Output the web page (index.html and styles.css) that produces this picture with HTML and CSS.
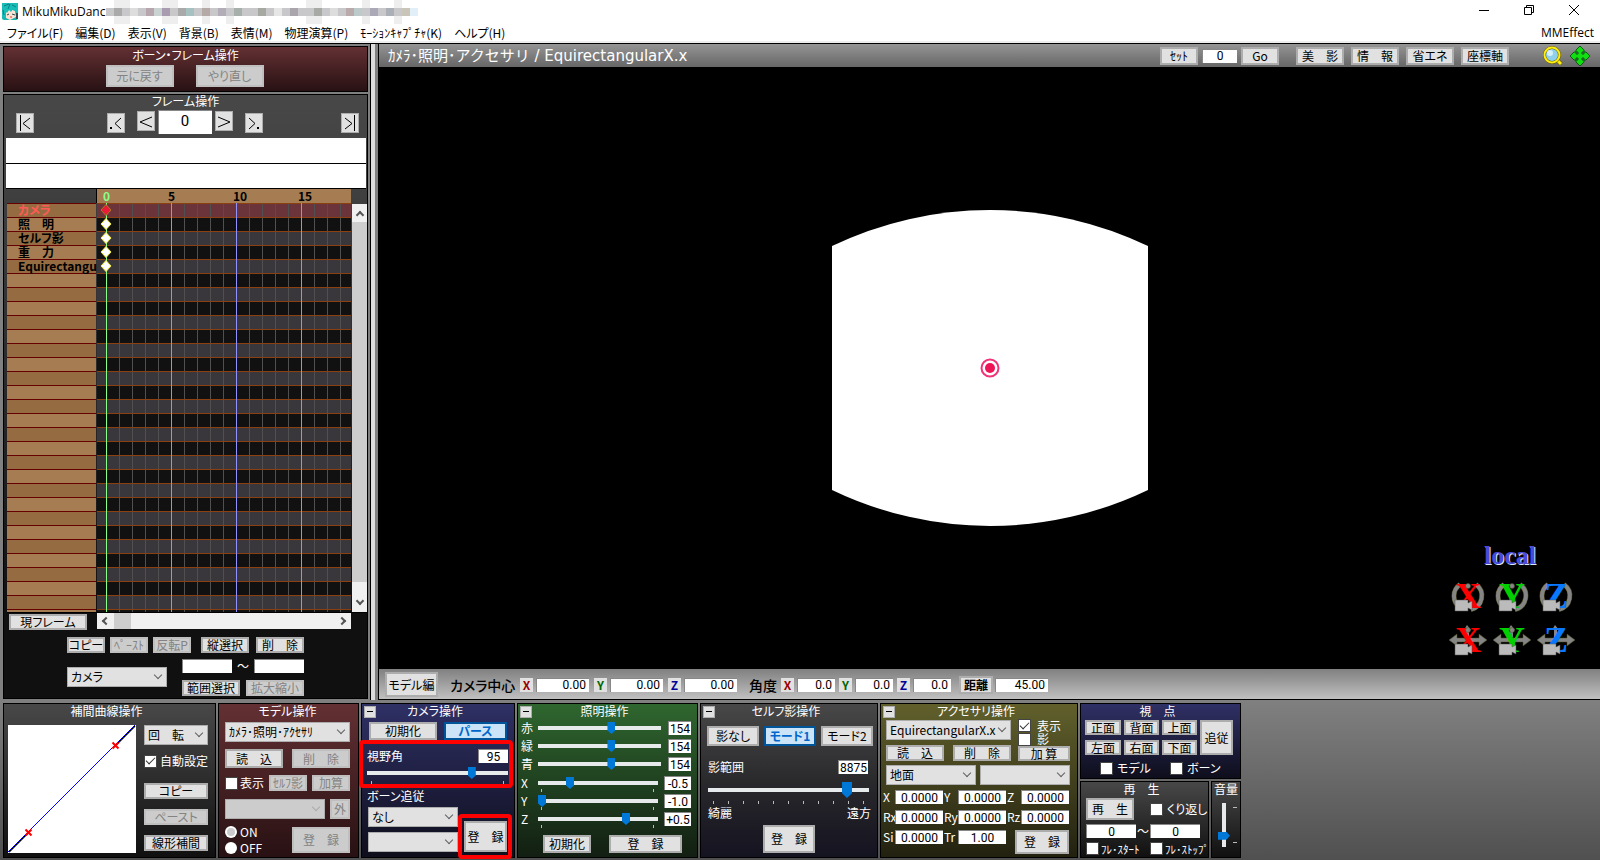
FILE: index.html
```html
<!DOCTYPE html>
<html lang="ja">
<head>
<meta charset="utf-8">
<title>MikuMikuDance</title>
<link rel="stylesheet" href="styles.css">
</head>
<body>
<div class="app">
  <header class="titlebar">
    <svg class="app-icon" width="16" height="17" viewBox="0 0 16 17" aria-hidden="true"><rect width="16" height="17" rx="2" fill="#16b5b2"/><path d="M4 9L8 6L13 8L14 14L8 17L4 15Z" fill="#fbe3d3"/><path d="M0 0H16V9L13 8L11 6L9 9L7 7L5 10L4 9L4 15L0 13Z" fill="#18bdb8"/><path d="M2 3L7 1M10 2l4 2M1 7l1 5M8 1l-2 5" stroke="#0b7d83" fill="none"/><path d="M5 12l2-1M10 11l3 1" stroke="#244b58"/><path d="M8 14h2" stroke="#d33"/><path d="M14 10h2v6h-2z" fill="#32484c"/></svg>
    <span class="app-name">MikuMikuDanc</span>
    <svg class="mosaic" width="312" height="24" viewBox="0 0 312 24" aria-hidden="true">
      <g fill="#eee"><rect x="8" width="16" height="24"/><rect x="56" width="16" height="24"/><rect x="96" width="8" height="24"/><rect x="120" width="8" height="24"/><rect x="200" width="16" height="24"/><rect x="256" width="8" height="24"/><rect x="288" width="8" height="24"/></g>
      <rect y="8" width="304" height="8" fill="#c8c8ca"/><rect x="304" y="8" width="8" height="8" fill="#e2eef8"/>
      <g><rect x="8" y="8" width="8" height="8" fill="#aaa"/><rect x="24" y="8" width="8" height="8" fill="#ddd"/><rect x="40" y="8" width="8" height="8" fill="#b8a6ae"/><rect x="48" y="8" width="8" height="8" fill="#cad3d2"/><rect x="56" y="8" width="8" height="8" fill="#a99bb0"/><rect x="72" y="8" width="8" height="8" fill="#aaa"/><rect x="80" y="8" width="8" height="8" fill="#a7c0c0"/><rect x="96" y="8" width="8" height="8" fill="#b5aaa8"/><rect x="112" y="8" width="8" height="8" fill="#b3adb8"/><rect x="128" y="8" width="8" height="8" fill="#a8b0ac"/><rect x="152" y="8" width="8" height="8" fill="#a6a8a2"/><rect x="168" y="8" width="8" height="8" fill="#e6e6e6"/><rect x="184" y="8" width="8" height="8" fill="#aaa5ac"/><rect x="208" y="8" width="8" height="8" fill="#a7aaa5"/><rect x="224" y="8" width="8" height="8" fill="#ddd"/><rect x="240" y="8" width="8" height="8" fill="#b9abac"/><rect x="248" y="8" width="8" height="8" fill="#bccaca"/><rect x="264" y="8" width="8" height="8" fill="#aba8b8"/><rect x="280" y="8" width="8" height="8" fill="#aab0b6"/><rect x="296" y="8" width="8" height="8" fill="#cac5b9"/></g>
    </svg>
    <div class="window-controls">
      <button aria-label="最小化"><svg width="12" height="12" viewBox="0 0 12 12"><path d="M1 6.5H11"/></svg></button>
      <button aria-label="元に戻す"><svg width="12" height="12" viewBox="0 0 12 12"><path d="M1.5 3.5h7v7h-7zM3.5 3.5v-2h7v7h-2"/></svg></button>
      <button aria-label="閉じる"><svg width="12" height="12" viewBox="0 0 12 12"><path d="M1 1L11 11M11 1L1 11"/></svg></button>
    </div>
  </header>
  <nav class="menubar">
    <button>ファイル(F)</button><button>編集(D)</button><button>表示(V)</button><button>背景(B)</button><button>表情(M)</button><button>物理演算(P)</button><button>ﾓｰｼｮﾝｷｬﾌﾟﾁｬ(K)</button><button>ヘルプ(H)</button>
    <button class="menu-end">MMEffect</button>
  </nav>

  <div class="workspace">
    <aside class="left-dock">
      <section class="panel red undo-panel">
        <h2>ボーン・フレーム操作</h2>
        <div class="undo-row"><button class="btn" disabled>元に戻す</button><button class="btn" disabled>やり直し</button></div>
      </section>
      <section class="panel dark frame-panel">
        <h2>フレーム操作</h2>
        <div class="frame-nav">
          <button class="btn" aria-label="最初"><svg width="16" height="18" viewBox="0 0 16 18"><path d="M3.5 1V17M13 4L6 9.500L13 15"/></svg></button>
          <div class="frame-mid">
            <button class="btn" aria-label="前のキー"><svg width="16" height="18" viewBox="0 0 16 18"><path d="M13 4L7 9.500L13 15"/><path class="dot" d="M2 14h2"/></svg></button>
            <button class="btn" aria-label="前のフレーム"><svg width="16" height="18" viewBox="0 0 16 18"><path d="M14 5L2 10L14 15"/></svg></button>
            <input class="field frame-no" value="0" aria-label="フレーム番号">
            <button class="btn" aria-label="次のフレーム"><svg width="16" height="18" viewBox="0 0 16 18"><path d="M2 5L14 10L2 15"/></svg></button>
            <button class="btn" aria-label="次のキー"><svg width="16" height="18" viewBox="0 0 16 18"><path d="M3 4L9 9.500L3 15"/><path class="dot" d="M11 14h2"/></svg></button>
          </div>
          <button class="btn" aria-label="最後"><svg width="16" height="18" viewBox="0 0 16 18"><path d="M12.500 1V17M3 4L10 9.500L3 15"/></svg></button>
        </div>
        <div class="lanes"><div></div><div></div></div>
        <div class="ruler"><span class="now">0</span><span>5</span><span>10</span><span>15</span></div>
        <div class="timeline">
          <ul class="tracks"><li class="selected">カメラ</li><li>照　明</li><li>セルフ影</li><li>重　力</li><li>Equirectangu</li></ul>
          <div class="keys">
            <svg width="12" height="70" viewBox="0 0 12 70" aria-hidden="true"><g fill="#fff" stroke="#f4f03c"><path d="M6 1.500L11 7L6 12.500L1 7Z" fill="#e81c38" stroke="#a87a20"/><path d="M6 15.500L11 21L6 26.500L1 21Z"/><path d="M6 29.500L11 35L6 40.500L1 35Z"/><path d="M6 43.500L11 49L6 54.500L1 49Z"/><path d="M6 57.500L11 63L6 68.500L1 63Z"/></g></svg>
          </div>
          <div class="vscroll"><i class="chev up"></i><div class="vthumb"></div><i class="chev"></i></div>
        </div>
        <div class="scroll-row">
          <button class="btn">現フレーム</button>
          <div class="hscroll"><i class="chev left"></i><div class="hthumb"></div><i class="chev right"></i></div>
        </div>
        <div class="edit-row">
          <button class="btn w38">コピー</button><button class="btn w38" disabled>ﾍﾟｰｽﾄ</button><button class="btn w38" disabled>反転P</button>
          <button class="btn w48 gap-left">縦選択</button><button class="btn w48 push">削　除</button>
        </div>
        <div class="range-row">
          <div class="pick target"><select aria-label="対象"><option>カメラ</option></select></div>
          <div class="range-box">
            <div class="range-line"><input class="field" aria-label="開始"><span>～</span><input class="field" aria-label="終了"></div>
            <div class="range-line"><button class="btn w58">範囲選択</button><button class="btn w58" disabled>拡大縮小</button></div>
          </div>
        </div>
      </section>
    </aside>
    <div class="splitter"></div>
    <main class="stage">
      <div class="stage-top">
        <h1>ｶﾒﾗ･照明･アクセサリ / EquirectangularX.x</h1>
        <button class="btn w38">ｾｯﾄ</button><input class="field set-no" value="0" aria-label="セット番号"><button class="btn w38">Go</button>
        <div class="toggles"><button class="btn w48">美　影</button><button class="btn w48">情　報</button><button class="btn w48">省エネ</button><button class="btn w48">座標軸</button></div>
        <button class="tool" aria-label="ズーム"><svg width="20" height="20" viewBox="0 0 20 20"><path d="M14 14L18 18" stroke="#665b00" stroke-width="4"/><path d="M14 14L18 18" stroke="#ffee10" stroke-width="3"/><circle cx="9" cy="9" r="7.500" fill="#8fd0ec" stroke="#665b00" stroke-width="3"/><circle cx="9" cy="9" r="7.500" fill="none" stroke="#ffee10" stroke-width="2"/><circle cx="7" cy="7" r="3" fill="#d6f1fb"/></svg></button>
        <button class="tool" aria-label="移動"><svg width="20" height="20" viewBox="0 0 20 20"><path d="M10 0L14 4V6H12V8H14V6H16L20 10L16 14H14V12H12V14H14V16L10 20L6 16V14H8V12H6V14H4L0 10L4 6H6V8H8V6H6V4Z" fill="#10e010" stroke="#0a5a14"/></svg></button>
      </div>
      <div class="viewport">
        <svg class="lens" width="316" height="316" viewBox="0 0 316 316" aria-hidden="true"><path d="M0 36A365 365 0 0 1 316 36V280A365 365 0 0 1 0 280Z" fill="#fff"/><circle cx="158" cy="158" r="8.500" fill="#fff" stroke="#f0347a" stroke-width="2"/><circle cx="158" cy="158" r="5" fill="#ee1458"/></svg>
        <div class="gizmo">
          <span class="local">local</span>
          <svg width="132" height="84" viewBox="0 0 132 84" role="img" aria-label="回転と移動">
            <defs>
              <g id="ring"><path d="M13 5.500A14 14 0 0 0 13 28.500M29 5.500A14 14 0 0 1 24 30.500" fill="none" stroke="#4d4a18" stroke-width="5"/><path d="M13 5.500A14 14 0 0 0 13 28.500M29 5.500A14 14 0 0 1 24 30.500" fill="none" stroke="#858585" stroke-width="4"/></g>
              <g id="arrows"><path d="M2 17L10 11V15H32V11L40 17L32 23V19H10V23Z" fill="#858585" stroke="#4d4a18" stroke-width=".5"/><path d="M20 2L24 7H22V14H19V7H17Z" fill="#858585"/></g>
              <g id="cam"><path d="M8 21H21V24L25 22V31L21 29V32H8Z" fill="#bbb" stroke="#555" stroke-width=".5"/></g>
              <circle id="knob" cx="21" cy="7" r="2.500" fill="#858585" stroke="#4d4a18" stroke-width=".5"/>
            </defs>
            <g class="axes">
              <use href="#ring"/><text class="ax" x="21" y="29">X</text><use href="#knob"/><use href="#cam"/>
              <g transform="translate(44 0)"><use href="#ring"/><text class="ay" x="21" y="29">Y</text><use href="#knob"/><use href="#cam"/></g>
              <g transform="translate(88 0)"><use href="#ring"/><text class="az" x="21" y="29">Z</text><use href="#cam"/></g>
              <g transform="translate(0 44)"><use href="#arrows"/><text class="ax" x="21" y="29">X</text><use href="#knob"/><use href="#cam"/></g>
              <g transform="translate(44 44)"><use href="#arrows"/><text class="ay" x="21" y="29">Y</text><use href="#knob"/><use href="#cam"/></g>
              <g transform="translate(88 44)"><use href="#arrows"/><text class="az" x="21" y="29">Z</text><use href="#cam"/></g>
            </g>
          </svg>
        </div>
      </div>
      <div class="stage-bottom">
        <button class="btn model-edit">モデル編</button>
        <span class="group-label">カメラ中心</span>
        <label class="axis x" for="cx">X</label><input class="field num wide" id="cx" value="0.00">
        <label class="axis y" for="cy">Y</label><input class="field num wide" id="cy" value="0.00">
        <label class="axis z" for="cz">Z</label><input class="field num wide" id="cz" value="0.00">
        <span class="group-label angle">角度</span>
        <label class="axis x" for="ax">X</label><input class="field num" id="ax" value="0.0">
        <label class="axis y" for="ay">Y</label><input class="field num" id="ay" value="0.0">
        <label class="axis z" for="az">Z</label><input class="field num" id="az" value="0.0">
        <button class="btn distance">距離</button><input class="field num wide" value="45.00" aria-label="距離">
      </div>
    </main>
  </div>

  <footer class="dock">
    <section class="panel dark interp">
      <h2>補間曲線操作</h2>
      <div class="interp-body">
        <svg class="curve" width="128" height="128" viewBox="0 0 128 128" aria-hidden="true"><rect width="128" height="128" fill="#fff"/><path d="M1 127L20 108M108 20L127 1" stroke="#000" stroke-width="1.500"/><path d="M0 127L127 0" stroke="#00f"/><path d="M17.500 104.500l6 6m0-6l-6 6M104.500 17.500l6 6m0-6l-6 6" stroke="red" stroke-width="2"/></svg>
        <div class="interp-side">
          <div class="pick"><select aria-label="補間対象"><option>回　転</option></select></div>
          <label class="check"><input type="checkbox" checked>自動設定</label>
          <button class="btn">コピー</button><button class="btn" disabled>ペースト</button><button class="btn">線形補間</button>
        </div>
      </div>
    </section>

    <section class="panel red model">
      <h2>モデル操作</h2>
      <div class="pick tight"><select aria-label="モデル"><option>ｶﾒﾗ･照明･ｱｸｾｻﾘ</option></select></div>
      <div class="row between h19"><button class="btn w58">読　込</button><button class="btn w58" disabled>削　除</button></div>
      <div class="row between h16"><label class="check"><input type="checkbox">表示</label><button class="btn w38" disabled>ｾﾙﾌ影</button><button class="btn w38" disabled>加算</button></div>
      <div class="row between h20"><div class="pick w100"><select disabled aria-label="外部親"></select></div><button class="btn w20" disabled>外</button></div>
      <div class="row between h26">
        <div class="radios"><label class="check"><input type="radio" name="ik" disabled checked>ON</label><label class="check"><input type="radio" name="ik">OFF</label></div>
        <button class="btn w58" disabled>登　録</button>
      </div>
    </section>

    <section class="panel blue camera">
      <div class="head"><button class="mini" aria-label="最小化"></button><h2>カメラ操作</h2></div>
      <div class="cam-top"><button class="btn">初期化</button><button class="btn active">パース</button></div>
      <div class="fov marked">
        <div class="row between"><label for="fov">視野角</label><input class="field w30" id="fov" value="95"></div>
        <input class="slider" type="range" min="1" max="125" value="95" aria-label="視野角">
        <div class="ticks"><i></i><i></i></div>
      </div>
      <div class="follow-label">ボーン追従</div>
      <div class="follow">
        <div class="picks"><div class="pick"><select aria-label="追従モデル"><option>なし</option></select></div><div class="pick"><select aria-label="追従ボーン"></select></div></div>
        <div class="register marked"><button class="btn">登　録</button></div>
      </div>
    </section>

    <section class="panel green light">
      <div class="head"><button class="mini" aria-label="最小化"></button><h2>照明操作</h2></div>
      <div class="color-row"><label for="r">赤</label><input class="slider" type="range" id="r" max="255" value="154"><input class="field" value="154" aria-label="赤の値"></div>
      <div class="color-row"><label for="g">緑</label><input class="slider" type="range" id="g" max="255" value="154"><input class="field" value="154" aria-label="緑の値"></div>
      <div class="color-row"><label for="b">青</label><input class="slider" type="range" id="b" max="255" value="154"><input class="field" value="154" aria-label="青の値"></div>
      <div class="dir-rows">
        <div class="dir-row"><label for="lx">X</label><input class="slider" type="range" id="lx" min="-10" max="10" value="-5"><input class="field" value="-0.5" aria-label="Xの値"></div>
        <div class="dir-row"><label for="ly">Y</label><input class="slider" type="range" id="ly" min="-10" max="10" value="-10"><input class="field" value="-1.0" aria-label="Yの値"></div>
        <div class="dir-row"><label for="lz">Z</label><input class="slider" type="range" id="lz" min="-10" max="10" value="5"><input class="field" value="+0.5" aria-label="Zの値"></div>
      </div>
      <div class="light-buttons"><button class="btn w48">初期化</button><button class="btn grow">登　録</button></div>
    </section>

    <section class="panel slate shadow">
      <div class="head"><button class="mini" aria-label="最小化"></button><h2>セルフ影操作</h2></div>
      <div class="modes"><button class="btn">影なし</button><button class="btn active">モード1</button><button class="btn">モード2</button></div>
      <div class="row between range-value"><label for="sr">影範囲</label><input class="field w30" id="sr" value="8875"></div>
      <input class="slider big" type="range" max="9999" value="8875" aria-label="影範囲">
      <div class="ticks"><i></i><i></i><i></i><i></i><i></i><i></i><i></i><i></i><i></i><i></i><i></i></div>
      <div class="row between ends"><span>綺麗</span><span>遠方</span></div>
      <button class="btn shadow-set">登　録</button>
    </section>

    <section class="panel olive accessory">
      <div class="head"><button class="mini" aria-label="最小化"></button><h2>アクセサリ操作</h2></div>
      <div class="acc-top">
        <div class="acc-left">
          <div class="pick tight"><select aria-label="アクセサリ"><option>EquirectangularX.x</option></select></div>
          <div class="row between"><button class="btn w58">読　込</button><button class="btn w58">削　除</button></div>
        </div>
        <div class="acc-right"><label class="check"><input type="checkbox" checked>表示</label><label class="check"><input type="checkbox">影</label><button class="btn">加 算</button></div>
      </div>
      <div class="acc-parent"><div class="pick"><select aria-label="親モデル"><option>地面</option></select></div><div class="pick"><select aria-label="親ボーン"></select></div></div>
      <div class="acc-grid">
        <label for="px">X</label><input class="field" id="px" value="0.0000"><label for="py">Y</label><input class="field" id="py" value="0.0000"><label for="pz">Z</label><input class="field" id="pz" value="0.0000">
        <label for="rx">Rx</label><input class="field" id="rx" value="0.0000"><label for="ry">Ry</label><input class="field" id="ry" value="0.0000"><label for="rz">Rz</label><input class="field" id="rz" value="0.0000">
        <label for="si">Si</label><input class="field" id="si" value="0.0000"><label for="tr">Tr</label><input class="field" id="tr" value="1.00"><button class="btn acc-set">登　録</button>
      </div>
    </section>

    <div class="last-column">
      <section class="panel blue view">
        <h2>視　点</h2>
        <div class="view-grid"><button class="btn">正面</button><button class="btn">背面</button><button class="btn">上面</button><button class="btn tall">追従</button><button class="btn">左面</button><button class="btn">右面</button><button class="btn">下面</button></div>
        <div class="view-checks"><label class="check"><input type="checkbox">モデル</label><label class="check"><input type="checkbox">ボーン</label></div>
      </section>
      <div class="play-line">
        <section class="panel dark play">
          <h2>再　生</h2>
          <div class="play-grid">
            <button class="btn play-btn">再　生</button><span></span><label class="check"><input type="checkbox">くり返し</label>
            <input class="field" value="0" aria-label="開始フレーム"><span>～</span><input class="field" value="0" aria-label="終了フレーム">
            <label class="check small"><input type="checkbox">ﾌﾚ･ｽﾀｰﾄ</label><span></span><label class="check small"><input type="checkbox">ﾌﾚ･ｽﾄｯﾌﾟ</label>
          </div>
        </section>
        <section class="panel dark volume">
          <h2>音量</h2>
          <div class="vol-body"><input class="slider vertical" type="range" max="100" value="20" aria-label="音量"><div class="vol-ticks"><i></i><i></i></div></div>
        </section>
      </div>
    </div>
  </footer>
</div>
</body>
</html>
```
FILE: styles.css
```css
* { box-sizing: border-box; }
body {
  margin: 0;
  background: #808080;
  color: #000;
  font: 12px/14px "Noto Sans CJK JP", sans-serif;
  font-feature-settings: "palt";
}
button, input, select { font: inherit; font-feature-settings: inherit; color: inherit; margin: 0; padding: 0; border-radius: 0; }
button { white-space: nowrap; }
h1, h2, ul { margin: 0; padding: 0; font: inherit; list-style: none; }
svg { display: block; flex: none; }
.app { min-height: 100vh; display: flex; flex-direction: column; }

/* Title and menu */
.titlebar { display: flex; height: 24px; padding-left: 2px; background: #fff; }
.app-icon { margin: 3px 4px 0 0; }
.app-name { width: 84px; font: 12px/24px "Open Sans", sans-serif; }
.window-controls { margin-left: auto; display: flex; gap: 33px; padding-right: 20px; align-items: center; height: 20px; }
.window-controls button { border: 0; background: none; width: 12px; height: 12px; }
.window-controls path { fill: none; stroke: #000; }
.menubar { display: flex; gap: 12px; height: 19px; padding: 0 6px 0 7px; background: #fff; border-bottom: 2px solid #eee; }
.menubar button { border: 0; background: none; line-height: 16px; }
.menubar .menu-end { margin-left: auto; font: 12px/16px "Open Sans", sans-serif; }

/* Shared controls */
.panel { border: 1px solid #000; color: #fff; min-width: 0; }
.panel h2 { height: 15px; line-height: 15px; text-align: center; }
.dock .panel h2 { padding-right: 6px; line-height: 14px; }
.red { background: linear-gradient(#633033, #281113); }
.dark { background: linear-gradient(#484848, #101010); }
.blue { background: linear-gradient(#2f3065, #0e0e1c); }
.green { background: linear-gradient(#2f662f, #121e12); }
.slate { background: linear-gradient(#484848, #2a292c 50%, #141320); }
.olive { background: linear-gradient(#61602c, #222110); }
.btn { border: 2px solid #adadad; background: #e1e1e1; color: #000; line-height: 12px; height: 16px; display: flex; align-items: center; justify-content: center; }
.btn:disabled { background: #ccc; border-color: #bfbfbf; color: #838383; }
.btn.active { background: #cce4f7; border-color: #005499; color: #0066cc; font-weight: bold; }
.btn path { fill: none; stroke: #000; stroke-width: 1; }
.btn .dot { stroke-width: 2; }
.field { border: 0; border-top: 1px solid #888; border-left: 1px solid #888; background: #fff; color: #000; height: 14px; font: 12px/13px Roboto, sans-serif; text-align: center; min-width: 0; width: 100%; }
.pick { position: relative; height: 20px; }
.pick select { appearance: none; width: 100%; height: 100%; border: 1px solid #adadad; background: #e1e1e1; color: #000; padding: 0 18px 0 3px; line-height: 16px; display: block; opacity: 1; }
.pick select:disabled { background: #ccc; }
.pick.tight select { padding-right: 10px; }
.pick::after { content: ""; position: absolute; right: 6px; top: 5px; width: 5px; height: 5px; border: solid #606060; border-width: 0 1px 1px 0; transform: rotate(45deg); pointer-events: none; }
.pick:has(:disabled)::after { border-color: #aaa; }
.check { display: flex; align-items: center; gap: 4px; white-space: nowrap; }
.check.small { font-size: 11px; gap: 2px; }
.check input { appearance: none; flex: none; width: 13px; height: 13px; background: #fff; border: 1px solid #444; display: grid; place-items: center; }
.check input[type="checkbox"]:checked::before { content: ""; width: 4px; height: 8px; margin-top: -3px; border: solid #333; border-width: 0 1px 1px 0; transform: rotate(45deg); }
.check input[type="radio"] { border-radius: 50%; border: 0; width: 12px; height: 12px; }
.check input[type="radio"]:checked::before { content: ""; width: 8px; height: 8px; border-radius: 50%; background: #ccc; }
.slider { appearance: none; display: block; width: 100%; min-width: 0; height: 12px; background: linear-gradient(#e7eaea, #e7eaea) center / 100% 4px no-repeat; }
.slider::-webkit-slider-thumb { appearance: none; width: 8px; height: 12px; background: #0078d7; clip-path: polygon(0 0, 100% 0, 100% 70%, 50% 100%, 0 70%); }
.slider.big { height: 16px; }
.slider.big::-webkit-slider-thumb { width: 10px; height: 16px; }
.ticks { display: flex; justify-content: space-between; }
.ticks i { width: 1px; height: 3px; background: #bbb; }
.row { display: flex; align-items: center; }
.between { justify-content: space-between; }
.w20 { width: 20px; } .w30 { width: 30px; } .w38 { width: 38px; } .w48 { width: 48px; } .w58 { width: 58px; } .w100 { width: 100px; }
.grow { flex: 1; }
.head { display: grid; grid-template-columns: 12px 1fr 12px; align-items: center; padding: 0 2px; }
.mini { width: 12px; height: 12px; border: 1px solid #adadad; background: linear-gradient(#000, #000) center / 6px 1px no-repeat #e1e1e1; }
.marked { position: relative; }
.marked::after { content: ""; position: absolute; border: 4px solid #f00; border-radius: 4px; pointer-events: none; z-index: 1; }

/* Workspace */
.workspace { flex: 1; display: flex; border-top: 1px solid #000; }
.left-dock { width: 370px; flex: none; padding: 2px 2px 1px 3px; display: flex; flex-direction: column; gap: 2px; }
.undo-panel { height: 46px; }
.undo-row { display: flex; justify-content: center; gap: 22px; margin-top: 3px; padding-right: 2px; }
.undo-row .btn { width: 68px; height: 22px; }
.frame-panel { flex: 1; display: flex; flex-direction: column; background: linear-gradient(#484848, #404040 90px, #101010 518px); }
.frame-panel h2 { height: 13px; line-height: 11px; }
.frame-nav { display: flex; justify-content: space-between; padding: 2px 8px 0 12px; height: 30px; }
.frame-nav > .btn { margin-top: 3px; }
.frame-nav .btn { width: 18px; height: 20px; border-width: 1px; }
.frame-mid { display: flex; margin-right: 6px; }
.frame-mid .btn { margin: 1px 3px 0; }
.frame-mid .btn:first-child { margin: 3px 9px 0 0; }
.frame-mid .btn:last-child { margin: 3px 0 0 9px; }
.frame-no { width: 54px; height: 24px; font-size: 15px; padding-bottom: 4px; }
.lanes { margin: 0 1px 0 2px; border-bottom: 1px solid #000; }
.lanes div { height: 25px; background: #fff; }
.lanes div + div { border-top: 1px solid #000; }
.ruler { margin: 0 16px 0 92px; height: 14px; background: #a67c52; border-left: 1px solid #000; color: #000; font: bold 12px/14px "Noto Sans CJK JP", sans-serif; display: grid; grid-template-columns: repeat(3, 65px) 1fr; padding-left: 6px; }
.now { color: #8f8; }
.timeline { display: flex; flex: 1; gap: 1px; margin-left: 3px; border-bottom: 1px solid #000; min-height: 200px; }
.tracks { width: 89px; padding-top: 1px; background: repeating-linear-gradient(#600 0 1px, #956c42 1px 14px, #600 14px 15px, #a67c52 15px 28px); color: #000; font-weight: bold; }
.tracks li { height: 14px; line-height: 12px; padding-left: 11px; white-space: nowrap; }
.tracks .selected { color: #ff5a55; }
.keys { flex: 1; padding-left: 3px; background:
  linear-gradient(#8f8, #8f8) 9px 0 / 1px 100% no-repeat,
  linear-gradient(90deg, #9090ff 1px, transparent 1px) 9px 0 / 65px 100%,
  repeating-linear-gradient(#8b4012 0 1px, transparent 1px 14px),
  linear-gradient(90deg, #505050 1px, transparent 1px) 9px 0 / 13px 100%,
  linear-gradient(#6b343a, #6b343a) 0 0 / 100% 14px no-repeat,
  repeating-linear-gradient(#39373c 0 14px, #111 14px 28px); }
.vscroll { width: 15px; margin: 1px 0 0; background: #f0f0f0; display: flex; flex-direction: column; align-items: center; }
.vthumb { flex: 1; width: 100%; background: #cdcdcd; margin-bottom: 14px; }
.chev { width: 6px; height: 6px; border: solid #555; border-width: 0 2px 2px 0; transform: rotate(45deg); margin: 2px 0 8px; flex: none; }
.chev.up { transform: rotate(225deg); margin: 8px 0 4px; }
.chev.left { transform: rotate(135deg); margin: 0 5px 0 6px; }
.chev.right { transform: rotate(-45deg); margin: 0 6px 0 auto; }
.scroll-row { display: flex; align-items: flex-start; padding-left: 5px; margin-right: 16px; }
.scroll-row .btn { width: 78px; margin: 1px 10px 0 0; }
.hscroll { flex: 1; height: 16px; background: #f0f0f0; display: flex; align-items: center; }
.hthumb { width: 17px; height: 16px; background: #cdcdcd; }
.edit-row { display: flex; gap: 5px; margin: 7px 63px 0; }
.edit-row .gap-left { margin-left: 5px; }
.edit-row .push { margin-left: auto; }
.range-row { display: flex; justify-content: space-between; margin: 6px 63px 2px; }
.target { width: 100px; margin-top: 8px; }
.range-box { width: 122px; }
.range-line { display: flex; justify-content: space-between; }
.range-line + .range-line { margin-top: 7px; }
.range-line .field { width: 50px; }
.splitter { flex: none; width: 9px; background: #ddd; border: solid #000; border-width: 0 1px; box-shadow: inset -3px 0 #808080; }

/* Stage */
.stage { flex: 1; display: flex; flex-direction: column; min-width: 0; }
.stage-top { height: 23px; display: flex; align-items: center; padding: 0 10px 0 9px; background: linear-gradient(#959595, #666); }
.stage-top h1 { color: #fff; font: 15px/22px "DejaVu Sans", "Noto Sans CJK JP", sans-serif; margin-right: auto; white-space: nowrap; }
.stage-top .btn { height: 18px; }
.set-no { width: 35px; margin: 0 4px; }
.toggles { display: flex; gap: 7px; margin: 0 32px 0 17px; }
.tool { border: 0; background: none; width: 20px; height: 20px; margin-left: 2px; }
.tool + .tool { margin-left: 7px; }
.viewport { flex: 1; position: relative; background: #000; display: grid; place-items: center; }
.gizmo { position: absolute; right: 21px; bottom: 6px; display: flex; flex-direction: column; align-items: center; gap: 9px; }
.local { font: bold 26px/28px "Liberation Serif", serif; color: #4a4ad8; text-shadow: 1px 1px #dce6ff; padding-right: 6px; }
.axes text { font: bold 36px "Liberation Serif", serif; text-anchor: middle; }
.ax { fill: #f00; } .ay { fill: #00d000; } .az { fill: #0878ff; }
.stage-bottom { height: 31px; display: flex; align-items: center; padding: 1px 6px 0; background: linear-gradient(#808080, #c0c0c0); border-bottom: 1px solid #000; }
.model-edit { width: 53px; height: 25px; margin-right: 12px; }
.group-label { font-size: 14px; width: 66px; margin-right: 4px; white-space: nowrap; font-weight: 500; }
.group-label.angle { width: 28px; margin-left: 7px; }
.axis { width: 13px; height: 14px; line-height: 14px; text-align: center; background: #e1e1e1; font-weight: bold; margin-right: 3px; }
.axis.x { color: #900; } .axis.y { color: #060; } .axis.z { color: #009; }
.num { width: 38px; text-align: right; padding-right: 3px; margin-right: 4px; }
.num.wide { width: 53px; margin-right: 5px; }
.distance { width: 34px; height: 18px; font-weight: bold; margin: 0 2px 0 4px; }

/* Bottom dock */
.dock { display: flex; gap: 2px; padding: 3px 3px 2px; background: linear-gradient(#808080, #505050); }
.dock .panel { flex: none; }
.dock .interp { width: 213px; }
.interp-body { display: flex; gap: 8px; padding: 6px 9px 4px 4px; }
.interp-side { flex: 1; display: flex; flex-direction: column; }
.interp-side .check { margin: 8px 0 14px; height: 16px; gap: 3px; }
.interp-side .btn + .btn { margin-top: 10px; }
.dock .model { width: 141px; padding: 0 8px 0 6px; }
.dock .model h2 { padding: 0; }
.model .pick.tight { margin-top: 3px; }
.h19, .h16 { margin-top: 7px; height: 19px; }
.h19 .btn { height: 19px; }
.h16 { height: 16px; }
.h16 .check { gap: 2px; }
.h20 { margin-top: 8px; }
.h20 .btn { height: 20px; }
.h26 { margin-top: 5px; }
.h26 .btn { height: 26px; }
.radios .check { height: 16px; gap: 3px; }
.dock .camera { width: 154px; }
.cam-top { display: grid; grid-template-columns: 68px 63px; gap: 7px; padding: 3px 0 0 7px; }
.cam-top .btn { height: 18px; }
.fov { height: 48px; padding: 9px 6px 0 5px; }
.fov::after { inset: 0 1px 0 -3px; }
.fov .slider { margin-top: 4px; }
.fov .ticks { margin: 2px 4px 0; }
.follow-label { padding-left: 5px; margin-top: 1px; height: 16px; }
.follow { display: flex; justify-content: space-between; align-items: flex-end; padding: 2px 7px 0 6px; }
.picks { width: 90px; display: grid; gap: 5px; }
.register .btn { width: 43px; height: 31px; }
.register::after { inset: -7px -5px -7px -6px; }
.dock .light { width: 181px; }
.color-row, .dir-row { display: grid; grid-template-columns: 17px 1fr 23px; align-items: center; height: 18px; padding: 0 6px 0 3px; }
.color-row .slider { width: auto; margin-right: 7px; }
.dir-rows { margin-top: 1px; }
.dir-row { grid-template-columns: 17px 1fr 27px; }
.dir-row .slider { width: auto; margin-right: 6px; height: 18px; background:
  linear-gradient(#e7eaea, #e7eaea) center / 100% 4px no-repeat,
  linear-gradient(#bbb, #bbb) 3px 100% / 1px 3px no-repeat,
  linear-gradient(#bbb, #bbb) calc(100% - 4px) 100% / 1px 3px no-repeat; }
.light-buttons { display: flex; gap: 18px; margin: 7px 15px 0 25px; }
.light-buttons .btn { height: 18px; }
.dock .shadow { width: 178px; }
.modes { display: grid; grid-template-columns: repeat(3, 1fr); gap: 5px; padding: 7px 4px 0 6px; }
.modes .btn { height: 20px; }
.range-value { margin: 14px 9px 8px 7px; }
.shadow .slider { width: calc(100% - 15px); margin: 0 8px 3px 7px; }
.shadow .ticks { margin: 0 13px 2px 12px; }
.ends { margin: 0 6px 5px 7px; }
.shadow-set { width: 52px; height: 28px; margin: 0 auto; }
.dock .accessory { width: 198px; }
.acc-top { display: grid; grid-template-columns: 125px 1fr; gap: 7px; padding: 0 7px 0 5px; }
.acc-left { padding-top: 1px; display: grid; gap: 5px; }
.acc-right .check { height: 13px; line-height: 12px; gap: 6px; }
.acc-right .check + .check { height: 14px; }
.acc-right .btn { width: 52px; height: 15px; }
.acc-parent { display: grid; grid-template-columns: 1fr 1fr; gap: 4px; padding: 4px 7px 0 5px; }
.acc-grid { display: grid; grid-template-columns: 13px 48px 15px 48px 15px 48px; grid-template-rows: 14px 14px 24px; row-gap: 6px; align-items: start; padding: 5px 0 0 1px; }
.acc-grid label { padding-left: 1px; }
.acc-set { grid-column: 5 / 7; justify-self: end; width: 54px; height: 24px; }
.last-column { width: 161px; display: flex; flex-direction: column; gap: 2px; }
.view { height: 76px; }
.view-grid { display: grid; grid-template-columns: 36px 35px 35px 33px; gap: 5px 3px; padding: 1px 5px 0 4px; }
.view-grid .btn { height: 15px; }
.view-grid .tall { grid-row: span 2; height: 35px; grid-column: 4; }
.view-checks { display: grid; grid-template-columns: 1fr 1fr; padding: 6px 0 0 19px; }
.play-line { flex: 1; display: flex; gap: 2px; }
.dock .play { flex: 1; }
.play-grid { display: grid; grid-template-columns: 50px 14px 50px; grid-template-rows: 22px 14px 13px; row-gap: 4px; padding: 1px 0 0 5px; align-items: center; text-align: center; }
.play-btn { width: 48px; height: 22px; }
.dock .volume { width: 30px; }
.dock .volume h2 { padding: 0; }
.vol-body { display: flex; justify-content: flex-end; gap: 3px; padding: 6px 3px 0 0; }
.slider.vertical { writing-mode: vertical-lr; direction: rtl; width: 12px; height: 44px; background: linear-gradient(#e7eaea, #e7eaea) center / 4px 100% no-repeat; }
.slider.vertical::-webkit-slider-thumb { width: 12px; height: 8px; clip-path: polygon(0 0, 70% 0, 100% 50%, 70% 100%, 0 100%); }
.vol-ticks { display: flex; flex-direction: column; justify-content: space-between; padding: 4px 0; }
.vol-ticks i { width: 4px; height: 1px; background: #bbb; }
```
